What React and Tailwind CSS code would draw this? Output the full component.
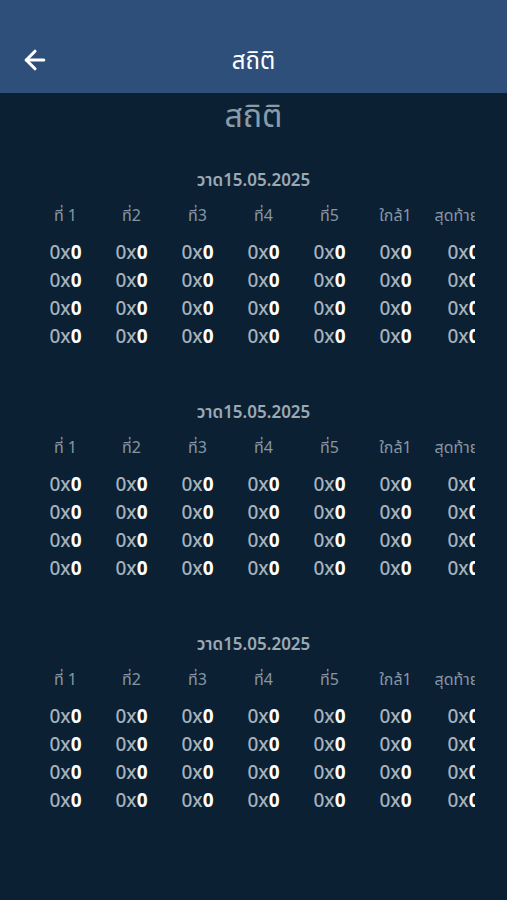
import { ArrowLeft } from 'lucide-react';

const columns = ['ที่ 1', 'ที่2', 'ที่3', 'ที่4', 'ที่5', 'ใกล้1', 'สุดท้าย'];
const sections = ['วาด15.05.2025', 'วาด15.05.2025', 'วาด15.05.2025'];

function StatTable({ date }) {
  return (
    <div className="flex flex-col items-center h-[232px]">
      <div className="h-[22px] mt-[8px] text-[17px] font-semibold text-[#9aa9b6] leading-[22px]">{date}</div>
      <div className="w-[442px] overflow-hidden mt-[13px]">
        <div className="grid grid-cols-[repeat(7,66px)] w-[462px]">
          {columns.map((c, i) => (
            <div key={c} className={`text-[16px] text-[#8797a5] leading-[22px] whitespace-nowrap ${i === 6 ? 'text-left pl-[6px]' : 'text-center'}`}>
              {c}
            </div>
          ))}
        </div>
        <div className="mt-[12px] flex flex-col">
          {[0, 1, 2, 3].map((r) => (
            <div key={r} className="grid grid-cols-[repeat(7,66px)] w-[462px] h-[28px] items-center">
              {columns.map((c, i) => (
                <div key={c} className={`text-[19px] leading-[28px] whitespace-nowrap ${i === 6 ? 'text-left pl-[19px]' : 'text-center'}`}>
                  <span className="text-[#a5b2bd] font-medium">0x</span>
                  <span className="text-white font-bold">0</span>
                </div>
              ))}
            </div>
          ))}
        </div>
      </div>
    </div>
  );
}

export default function App() {
  return (
    <div className="min-h-[900px] bg-[#0b2033] font-['Noto_Sans','Noto_Sans_Thai',sans-serif]">
      <div className="h-[93px] bg-[#2f4f7b] flex items-center relative pt-[26px]">
        <div className="pl-[20px] text-white">
          <ArrowLeft size={30} strokeWidth={2.5} />
        </div>
        <div className="absolute left-0 right-0 top-[26px] bottom-0 flex items-center justify-center text-white text-[24px] pointer-events-none">สถิติ</div>
      </div>
      <div className="text-center text-[32px] text-[#8a9ca9] leading-[44px]">สถิติ</div>
      <div className="mt-[24px] flex flex-col">
        {sections.map((d, i) => (
          <StatTable key={i} date={d} />
        ))}
      </div>
    </div>
  );
}
